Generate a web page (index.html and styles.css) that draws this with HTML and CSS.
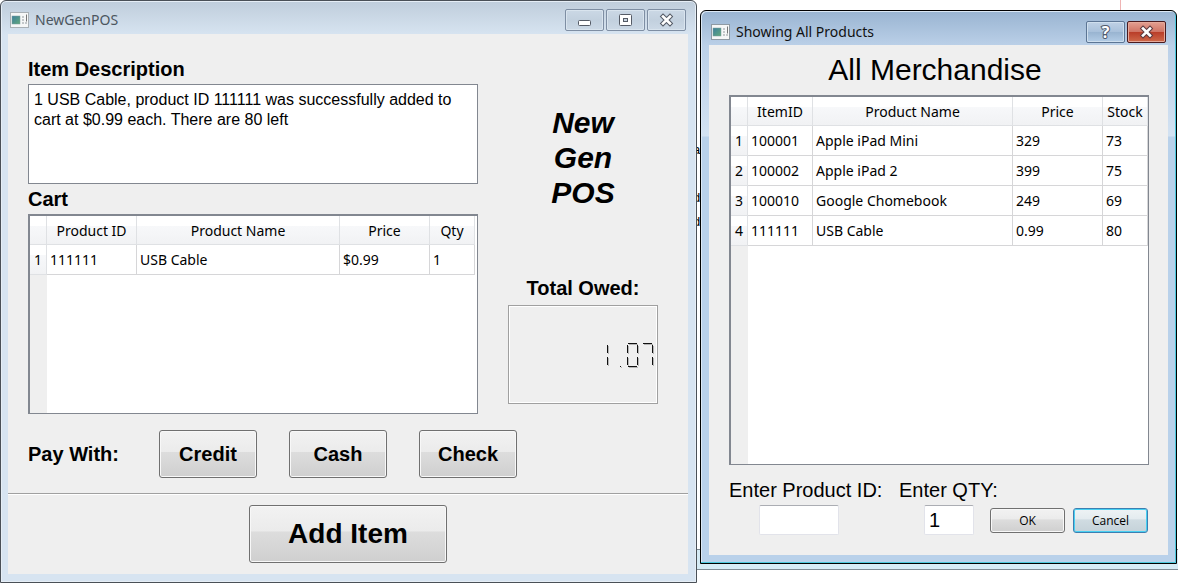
FILE: index.html
```
<!DOCTYPE html>
<html lang="en">
<head>
<meta charset="utf-8">
<title>NewGenPOS</title>
<link rel="stylesheet" href="styles.css">
</head>
<body>
<div class="desktop">
  <div class="backdrop" aria-hidden="true">
    <span class="scrap scrap-a">a</span>
    <span class="scrap scrap-b">d</span>
    <span class="scrap scrap-c">d</span>
    <span class="back-rule"></span>
    <span class="back-edge"></span>
    <span class="back-red"></span>
  </div>

  <main class="window pos">
    <header class="titlebar">
      <svg class="app-icon" width="19" height="16" viewBox="0 0 19 16" aria-hidden="true">
        <defs><linearGradient id="pic" x1="0" y1="0" x2="1" y2="1"><stop offset="0" stop-color="#3c7f9c"/><stop offset="1" stop-color="#63a97c"/></linearGradient></defs>
        <rect x=".5" y=".5" width="18" height="15" fill="#f6f7f7" stroke="#a9b0b5"/>
        <rect x="2" y="4" width="8" height="8" fill="url(#pic)" stroke="#7d9c9c" stroke-width=".5"/>
        <path d="M12 4h2v2h-2zM12 7h2v2h-2zM12 10h2v2h-2zM15 10h2v2h-2z" fill="#c4c8ca"/>
        <path d="M16.500 2.500v7" stroke="#777"/>
      </svg>
      <h1 class="title">NewGenPOS</h1>
      <div class="caption-buttons">
        <button class="cap" type="button" aria-label="Minimize"><svg width="15" height="14" viewBox="0 0 15 14"><rect x="1.500" y="7.500" width="12" height="5" rx="1" fill="#fff" stroke="#555b66"/></svg></button>
        <button class="cap" type="button" aria-label="Maximize"><svg width="15" height="14" viewBox="0 0 15 14"><rect x="1.500" y="1.500" width="12" height="11" rx="1" fill="#fff" stroke="#555b66"/><rect x="5.500" y="5.500" width="4" height="3" fill="#c8d4e0" stroke="#555b66"/></svg></button>
        <button class="cap" type="button" aria-label="Close"><svg width="15" height="14" viewBox="0 0 15 14"><path d="M4 3.500L11 10.500M11 3.500L4 10.500" stroke="#555b66" stroke-width="4.600" stroke-linecap="square"/><path d="M4 3.500L11 10.500M11 3.500L4 10.500" stroke="#fff" stroke-width="2.600" stroke-linecap="square"/></svg></button>
      </div>
    </header>
    <div class="client">
      <div class="workspace">
        <section class="entry">
          <label class="heading" for="desc">Item Description</label>
          <textarea class="desc" id="desc" readonly>1 USB Cable, product ID 111111 was successfully added to cart at $0.99 each. There are 80 left</textarea>
          <h2 class="heading">Cart</h2>
          <div class="grid-frame cart">
            <table class="grid">
              <colgroup><col class="c-num"><col class="c-90"><col><col class="c-90"><col class="c-45"></colgroup>
              <thead><tr><td></td><th scope="col">Product ID</th><th scope="col">Product Name</th><th scope="col">Price</th><th scope="col">Qty</th></tr></thead>
              <tbody><tr><th scope="row">1</th><td>111111</td><td>USB Cable</td><td>$0.99</td><td>1</td></tr></tbody>
            </table>
          </div>
        </section>
        <aside class="side">
          <p class="brand">New<br>Gen<br>POS</p>
          <h2 class="heading owed">Total Owed:</h2>
          <div class="lcd" role="img" aria-label="1.07">
            <span class="digit"><i class="seg b"></i><i class="seg c"></i></span>
            <span class="digit"><i class="seg point"></i></span>
            <span class="digit"><i class="seg a"></i><i class="seg b"></i><i class="seg c"></i><i class="seg d"></i><i class="seg e"></i><i class="seg f"></i></span>
            <span class="digit"><i class="seg a"></i><i class="seg b"></i><i class="seg c"></i></span>
          </div>
        </aside>
      </div>
      <div class="pay">
        <span class="heading pay-label">Pay With:</span>
        <button class="btn pay-btn" type="button">Credit</button>
        <button class="btn pay-btn" type="button">Cash</button>
        <button class="btn pay-btn" type="button">Check</button>
      </div>
      <div class="add">
        <button class="btn add-btn" type="button">Add Item</button>
      </div>
    </div>
  </main>

  <section class="window dialog" role="dialog" aria-label="Showing All Products">
    <header class="titlebar">
      <svg class="app-icon" width="19" height="16" viewBox="0 0 19 16" aria-hidden="true">
        <rect x=".5" y=".5" width="18" height="15" fill="#f6f7f7" stroke="#8f9aa3"/>
        <rect x="2" y="4" width="8" height="8" fill="url(#pic)" stroke="#7d9c9c" stroke-width=".5"/>
        <path d="M12 4h2v2h-2zM12 7h2v2h-2zM12 10h2v2h-2zM15 10h2v2h-2z" fill="#c4c8ca"/>
        <path d="M16.500 2.500v7" stroke="#777"/>
      </svg>
      <h2 class="title">Showing All Products</h2>
      <div class="caption-buttons">
        <button class="cap help" type="button" aria-label="Help"><span class="mark">?</span></button>
        <button class="cap close" type="button" aria-label="Close"><svg width="15" height="14" viewBox="0 0 15 14"><path d="M4 3.500L11 10.500M11 3.500L4 10.500" stroke="#5c3b40" stroke-width="4.600" stroke-linecap="square"/><path d="M4 3.500L11 10.500M11 3.500L4 10.500" stroke="#fff" stroke-width="2.600" stroke-linecap="square"/></svg></button>
      </div>
    </header>
    <div class="client">
      <h3 class="banner">All Merchandise</h3>
      <div class="grid-frame products">
        <table class="grid">
          <colgroup><col class="c-num"><col class="c-65"><col><col class="c-90"><col class="c-45"></colgroup>
          <thead><tr><td></td><th scope="col">ItemID</th><th scope="col">Product Name</th><th scope="col">Price</th><th scope="col">Stock</th></tr></thead>
          <tbody>
            <tr><th scope="row">1</th><td>100001</td><td>Apple iPad Mini</td><td>329</td><td>73</td></tr>
            <tr><th scope="row">2</th><td>100002</td><td>Apple iPad 2</td><td>399</td><td>75</td></tr>
            <tr><th scope="row">3</th><td>100010</td><td>Google Chomebook</td><td>249</td><td>69</td></tr>
            <tr><th scope="row">4</th><td>111111</td><td>USB Cable</td><td>0.99</td><td>80</td></tr>
          </tbody>
        </table>
      </div>
      <form class="order">
        <label for="pid">Enter Product ID:</label>
        <label class="qty-label" for="qty">Enter QTY:</label>
        <input class="field pid" id="pid" type="text">
        <input class="field qty" id="qty" type="text" value="1">
        <div class="actions">
          <button class="btn small" type="button">OK</button>
          <button class="btn small default" type="button">Cancel</button>
        </div>
      </form>
    </div>
  </section>
</div>
</body>
</html>
```
FILE: styles.css
```
* { box-sizing: border-box; }

body {
  margin: 0;
  background: #fff;
  color: #000;
  font-family: "Liberation Sans", Arial, sans-serif;
}

h1, h2, h3, p { margin: 0; font-weight: normal; }

.desktop {
  position: relative;
  display: grid;
  grid-template-columns: minmax(0, 697fr) minmax(0, 477fr);
  align-items: start;
  column-gap: 3px;
  min-height: 100vh;
  padding-right: 1px;
  overflow: hidden;
}

/* Slivers of the page that lies under both windows */
.backdrop { position: absolute; inset: 0; }
.scrap { position: absolute; left: 693px; font-size: 13px; line-height: 16px; }
.scrap-a { top: 142px; }
.scrap-b { top: 190px; }
.scrap-c { top: 214px; }
.back-rule { position: absolute; left: 690px; top: 549px; right: 0; height: 1px; background: #7b8790; }
.back-edge { position: absolute; left: 690px; top: 550px; right: 0; height: 20px; background: #d6ebf5; border-bottom: 1px solid #7f8b94; }
.back-red { position: absolute; left: 1120px; top: 0; width: 1px; height: 12px; background: #efb4b4; }

.window {
  position: relative;
  border: 1px solid #4a5057;
  border-radius: 6px 6px 0 0;
}

.pos {
  padding: 0 8px 8px 7px;
  background: linear-gradient(#bfcddb, #d7e4f1 34px);
  box-shadow: inset 0 0 0 1px #e6eef6;
}

.dialog {
  margin-top: 10px;
  padding: 0 8px 8px;
  border-color: #000;
  background: linear-gradient(#99b4d1, #bbd0e8 35px, #d3e2f2 125px, #b9d1ea 126px);
  box-shadow: inset -1px -1px 0 #4cc8dc, inset 1px 1px 0 #dbe8f5;
}

.titlebar {
  display: flex;
  align-items: center;
  gap: 6px;
  height: 33px;
  padding: 4px 2px 0 2px;
}

.dialog .titlebar { height: 34px; padding-top: 7px; }

.app-icon { flex: none; }

.title {
  flex: 1;
  font: 14px/20px "Noto Sans", "Open Sans", sans-serif;
  color: #4c5660;
  white-space: nowrap;
}

.dialog .title { color: #111; }

.caption-buttons { display: flex; gap: 2px; }

.cap {
  display: flex;
  align-items: center;
  justify-content: center;
  width: 39px;
  height: 22px;
  padding: 0;
  border: 1px solid #7e8ea3;
  border-radius: 2px;
  background: linear-gradient(#cbd8e5, #c2d0de 50%, #ccd9e6);
  box-shadow: inset 0 0 0 1px #d9e4ee;
}

.cap.help {
  border-color: #5c7594;
  background: linear-gradient(#bfd1e5, #a9c1db 48%, #98b3d0 50%, #b3cce6);
  box-shadow: inset 0 0 0 1px #cfdfee;
}

.cap.close {
  border-color: #4a1a1e;
  background: linear-gradient(#e3a092, #d07565 48%, #b93c28 50%, #cf6a4b);
  box-shadow: inset 0 0 0 1px #e5a99a;
}

.mark {
  font: bold 16px/20px "Open Sans", sans-serif;
  color: #fff;
  -webkit-text-stroke: 2px #4e5a6b;
  paint-order: stroke fill;
}

.client { background: #efefef; }

.workspace {
  display: flex;
  gap: 30px;
  padding: 23px 30px 16px 20px;
}

.entry { flex: 1; display: flex; flex-direction: column; gap: 3px; min-width: 0; }

.heading { font-size: 20px; line-height: 24px; font-weight: bold; white-space: nowrap; }

.desc {
  display: block;
  width: 100%;
  height: 100px;
  margin: 0;
  padding: 5px;
  border: 1px solid #828790;
  background: #fff;
  color: #000;
  font: 16px/20px "Liberation Sans", Arial, sans-serif;
  resize: none;
  outline: none;
}

.grid-frame {
  border: solid #828790;
  border-width: 2px 1px 1px 2px;
  background: linear-gradient(#efefef, #efefef) 0 0 / 17px 100% no-repeat #fff;
}

.cart { height: 200px; padding-right: 2px; }
.products { height: 370px; }

.grid {
  width: 100%;
  table-layout: fixed;
  border-collapse: separate;
  border-spacing: 0;
  background: #fff;
  font: 14px/20px "Noto Sans", "Open Sans", sans-serif;
}

.c-num { width: 17px; }
.c-45 { width: 45px; }
.c-65 { width: 65px; }
.c-90 { width: 90px; }

.grid th, .grid td {
  height: 30px;
  padding: 0 3px;
  border: solid #d6d6d8;
  border-width: 0 1px 1px 0;
  font-weight: normal;
  text-align: left;
  white-space: nowrap;
}

.grid thead th, .grid thead td {
  height: 29px;
  padding: 2px 0 0;
  border-color: #dfe1e4;
  background: linear-gradient(#fff 35%, #f7f8fa 36%, #f1f2f4);
  text-align: center;
}

.grid tbody th {
  padding: 0;
  border-color: #dfe1e4;
  background: linear-gradient(#fff 35%, #f7f8fa 36%, #f1f2f4);
  text-align: center;
}

.side {
  display: flex;
  flex-direction: column;
  width: 150px;
  padding: 48px 0 10px;
  text-align: center;
}

.brand { font-size: 30px; line-height: 35px; font-weight: bold; font-style: italic; }

.owed { margin-top: auto; margin-bottom: 5px; }

.lcd {
  display: flex;
  align-items: center;
  justify-content: flex-end;
  gap: 4px;
  height: 99px;
  padding-right: 4px;
  border: 1px solid #a0a0a0;
  box-shadow: inset 1px 1px 0 #fff, inset -1px -1px 0 #fff;
}

.digit { position: relative; width: 11px; height: 24px; }
.seg { position: absolute; background: #111; box-shadow: 1px 1px 0 #b4b4b4; }
.a, .d { left: 1px; right: 1px; height: 1px; }
.a { top: 0; }
.d { bottom: 0; }
.b, .c, .e, .f { width: 1px; height: 8px; }
.b, .c { right: 0; }
.e, .f { left: 0; }
.b, .f { top: 2px; }
.c, .e { bottom: 2px; }
.point { right: 2px; bottom: 0; width: 1px; height: 1px; }

.btn {
  border: 1px solid #707070;
  border-radius: 3px;
  background: linear-gradient(#f2f2f2, #ebebeb 45%, #dddddd 46%, #cfcfcf);
  box-shadow: inset 0 0 0 1px #f8f8f8;
  color: #000;
  font-family: "Liberation Sans", Arial, sans-serif;
  font-weight: bold;
}

.pay {
  display: flex;
  align-items: center;
  gap: 32px;
  padding: 0 20px 15px;
}

.pay-label { width: 99px; }
.pay-btn { width: 98px; height: 48px; font-size: 20px; }

.add {
  display: flex;
  justify-content: center;
  padding: 11px 0;
  border-top: 1px solid #a0a0a0;
  box-shadow: inset 0 1px 0 #fff;
}

.add-btn { width: 198px; height: 58px; font-size: 28px; }

.dialog .client { padding: 5px 19px 20px 20px; }

.banner {
  padding: 0 8px 5px 0;
  font-size: 30px;
  line-height: 40px;
  text-align: center;
}

.order {
  display: grid;
  grid-template-columns: 170px 75px 1fr;
  margin-top: 13px;
  row-gap: 3px;
  font-size: 20px;
  line-height: 24px;
}

.order label { white-space: nowrap; }
.qty-label { grid-column: 2 / 4; }

.field {
  height: 30px;
  padding: 0 4px;
  border: 1px solid #e2e3ea;
  border-top-color: #abadb3;
  border-radius: 2px;
  background: #fff;
  color: #000;
  font: 20px "Liberation Sans", Arial, sans-serif;
  outline: none;
}

.pid { width: 80px; margin-left: 30px; }
.qty { width: 50px; margin-left: 25px; }

.actions {
  display: flex;
  align-items: center;
  justify-content: flex-end;
  gap: 8px;
  padding-right: 1px;
}

.small {
  width: 75px;
  height: 25px;
  padding: 0;
  font: 12px "Open Sans", "Noto Sans", sans-serif;
}

.default {
  border-color: #3c7fb1;
  background: linear-gradient(#eef3f5, #e3ebef 45%, #d0dce2 46%, #c5d2d9);
  box-shadow: inset 0 0 0 1px #48d0f2;
}
```
